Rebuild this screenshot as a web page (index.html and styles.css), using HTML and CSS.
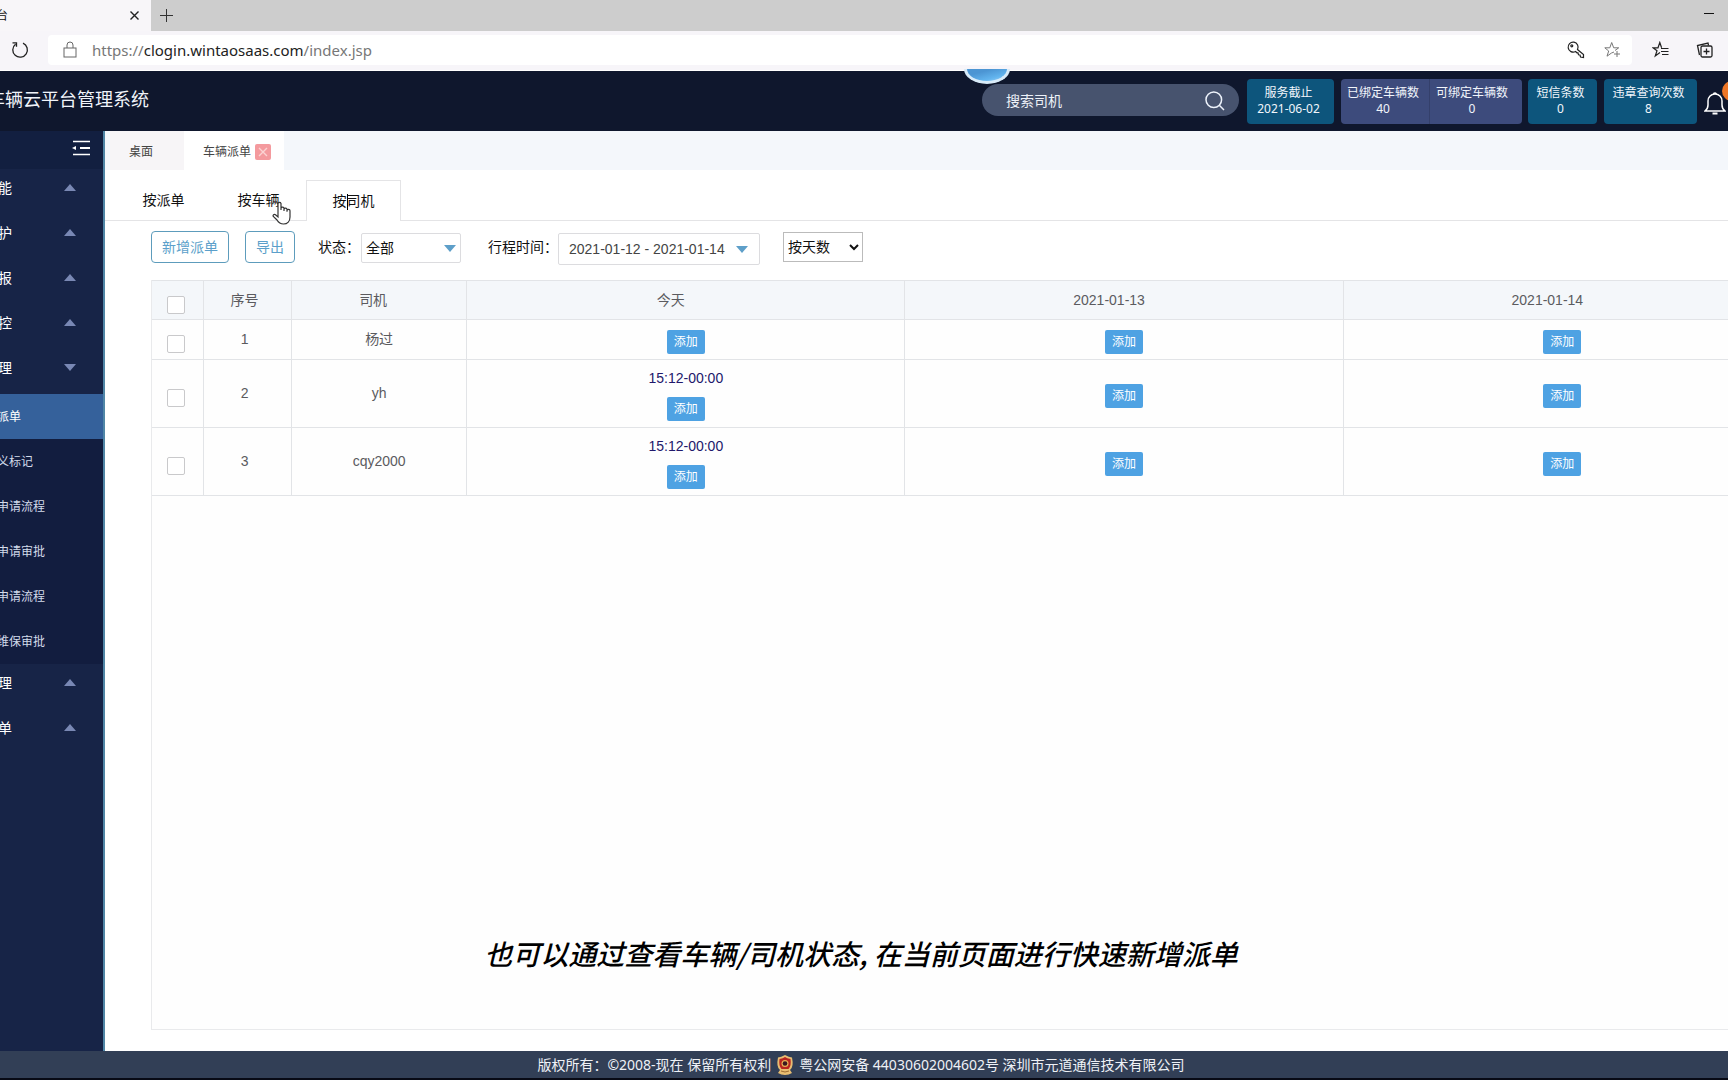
FILE: index.html
```html
<!DOCTYPE html>
<html lang="zh-CN">
<head>
<meta charset="utf-8">
<title>车辆云平台管理系统</title>
<link rel="stylesheet" href="styles.css">
</head>
<body>
<div class="tabstrip">
  <div class="browser-tab"><span class="browser-tab-title">台</span>
    <button class="icon-btn" aria-label="关闭标签页"><svg width="9" height="9" viewBox="0 0 9 9"><path d="M.5 .5l8 8M8.500 .5l-8 8" stroke="#222" stroke-width="1.400"/></svg></button>
  </div>
  <button class="icon-btn new-tab" aria-label="新建标签页"><svg width="13" height="13" viewBox="0 0 13 13"><path d="M6.500 0v13M0 6.500h13" stroke="#333"/></svg></button>
  <button class="icon-btn minimize" aria-label="最小化"><svg width="10" height="5" viewBox="0 0 10 5"><path d="M0 .5h10" stroke="#111"/></svg></button>
</div>
<div class="toolbar">
  <button class="icon-btn reload" aria-label="刷新"><svg width="18" height="18" viewBox="0 0 18 18" fill="none" stroke="#222" stroke-width="1.300"><path d="M12 2.200A7.300 7.300 0 1 1 4.500 3.200M1.500 1.800h4v4"/></svg></button>
  <div class="address">
    <svg width="14" height="18" viewBox="0 0 14 18" fill="none" stroke="#666"><rect x="1" y="7" width="12" height="9"/><path d="M4 7V4a3 3 0 0 1 6 0v3"/></svg>
    <span class="url">https://<b>clogin.wintaosaas.com</b>/index.jsp</span>
    <svg width="18" height="18" viewBox="0 0 18 18" fill="none" stroke="#222" stroke-width="1.200"><path d="M10.500 8.500a5 5 0 1 0-2 2l1.500 1.300 1 0 .5 2 1.500.2.500 2 3 .5V13.500z"/><circle cx="4.800" cy="4.800" r="1"/></svg>
    <svg width="18" height="18" viewBox="0 0 18 18" fill="none" stroke="#777"><path d="M10 11l-2.500 1-4.500 3.200L4.700 10 .8 6.800h5L7.700 1.500l2 5.300h5L11 9.500M13 10v6M10 13h6"/></svg>
  </div>
  <div class="toolbar-actions">
    <svg width="18" height="18" viewBox="0 0 18 18" fill="none" stroke="#222" stroke-width="1.200"><path d="M8 11.500l-4.700 3.500L5 9.800 1 6.800h5l1.800-5.300 1.800 5.300M9 7.500h7.500M9 10.500h7.500M10 13.500h6.500"/></svg>
    <svg width="18" height="18" viewBox="0 0 18 18" fill="none" stroke="#222" stroke-width="1.300"><rect x="5" y="5" width="11" height="11" rx="1.500"/><path d="M10.500 7.500v6M7.500 10.500h6M3.500 14L1.500 4.500 12 2l.5 2.500"/></svg>
  </div>
</div>

<header class="header">
  <h1 class="title">车辆云平台管理系统</h1>
  <div class="droplet"></div>
  <div class="search">
    <input class="search-input" type="text" placeholder="搜索司机" aria-label="搜索司机">
    <svg width="20" height="20" viewBox="0 0 20 20" fill="none" stroke="#eef3fb" stroke-width="1.500"><circle cx="8.800" cy="8.800" r="7.800"/><path d="M14.300 14.300L19 19"/></svg>
  </div>
  <div class="stat stat-date"><span>服务截止</span><span>2021-06-02</span></div>
  <div class="stat-pair">
    <div class="stat-half"><span>已绑定车辆数</span><span>40</span></div>
    <div class="stat-half"><span>可绑定车辆数</span><span>0</span></div>
  </div>
  <div class="stat stat-sms"><span>短信条数</span><span>0</span></div>
  <div class="stat stat-query"><span>违章查询次数</span><span>8</span></div>
  <button class="bell" aria-label="通知"><svg width="22" height="24" viewBox="0 0 22 24" fill="none" stroke="#fff" stroke-width="1.500"><path d="M1 20c2-1.500 3-3 3-6V10a7 7 0 0 1 14 0v4c0 3 1 4.500 3 6zM9.500 3.500a1.500 1.500 0 0 1 3 0"/><path d="M8.500 22.500h5" stroke-width="2"/></svg><span class="bell-dot"></span></button>
</header>

<div class="layout">
  <nav class="sidebar">
    <div class="collapse"><button class="icon-btn" aria-label="收起菜单"><svg width="18" height="16" viewBox="0 0 18 16"><path d="M1 1.500h17M1 14.500h17" stroke="#fff" stroke-width="1.400"/><path d="M8 8h10" stroke="#fff" stroke-width="2"/><path d="M0 8l4-2v4z" fill="#fff"/></svg></button></div>
    <a class="group" href="#"><span>能</span><i class="up"></i></a>
    <a class="group" href="#"><span>护</span><i class="up"></i></a>
    <a class="group" href="#"><span>报</span><i class="up"></i></a>
    <a class="group" href="#"><span>控</span><i class="up"></i></a>
    <a class="group" href="#"><span>理</span><i class="down"></i></a>
    <div class="submenu">
      <a class="item current" href="#">派单</a>
      <a class="item" href="#">义标记</a>
      <a class="item" href="#">申请流程</a>
      <a class="item" href="#">申请审批</a>
      <a class="item" href="#">申请流程</a>
      <a class="item" href="#">维保审批</a>
    </div>
    <a class="group" href="#"><span>理</span><i class="up"></i></a>
    <a class="group" href="#"><span>单</span><i class="up"></i></a>
  </nav>

  <main class="main">
    <div class="page-tabs">
      <a class="page-tab" href="#">桌面</a>
      <div class="page-tab open"><a href="#">车辆派单</a><button class="tab-close" aria-label="关闭车辆派单"><svg width="10" height="10" viewBox="0 0 10 10"><path d="M1 1l8 8M9 1L1 9" stroke="#fbd3d3" stroke-width="1.400"/></svg></button></div>
    </div>
    <div class="view-tabs">
      <button class="view-tab">按派单</button>
      <button class="view-tab">按车辆<svg class="pointer" width="20" height="25" viewBox="0 0 20 25"><path d="M6 14V3.500a1.600 1.600 0 0 1 3 0V10l0-1.500a1.500 1.500 0 0 1 3 .3V11l0-1.500a1.500 1.500 0 0 1 3 .3v2l0-1a1.400 1.400 0 0 1 3 .2V17c0 4-2.500 7-6.500 7-3.500 0-5-1.500-6.500-4L1.300 16.500c-.8-1.500.8-2.700 2.200-1.800L6 17z" fill="#fff" stroke="#333" stroke-width="1.200"/></svg></button>
      <button class="view-tab chosen">按<span class="caret"></span>司机</button>
    </div>
    <div class="filters">
      <button class="outline">新增派单</button>
      <button class="outline">导出</button>
      <label class="state-label" for="state">状态：</label>
      <span class="field state-field"><select id="state"><option>全部</option></select></span>
      <label class="range-label" for="range">行程时间：</label>
      <span class="field range-field"><input id="range" type="text" value="2021-01-12 - 2021-01-14" readonly></span>
      <select class="unit" aria-label="统计方式"><option>按天数</option></select>
    </div>
    <div class="grid">
      <table>
        <colgroup><col class="c-check"><col class="c-no"><col class="c-driver"><col class="c-day"><col class="c-day"><col class="c-day"></colgroup>
        <thead><tr><th><input type="checkbox" aria-label="全选"></th><th class="no">序号</th><th class="driver-head">司机</th><th class="day-head">今天</th><th class="day-head">2021-01-13</th><th class="day-head">2021-01-14</th></tr></thead>
        <tbody>
          <tr><td><input type="checkbox" aria-label="选择 1"></td><td class="no">1</td><td>杨过</td><td><button class="add">添加</button></td><td><button class="add">添加</button></td><td><button class="add">添加</button></td></tr>
          <tr class="tall"><td><input type="checkbox" aria-label="选择 2"></td><td class="no">2</td><td>yh</td><td><a class="trip" href="#">15:12-00:00</a><button class="add">添加</button></td><td><button class="add">添加</button></td><td><button class="add">添加</button></td></tr>
          <tr class="tall"><td><input type="checkbox" aria-label="选择 3"></td><td class="no">3</td><td>cqy2000</td><td><a class="trip" href="#">15:12-00:00</a><button class="add">添加</button></td><td><button class="add">添加</button></td><td><button class="add">添加</button></td></tr>
        </tbody>
      </table>
    </div>
  </main>
</div>

<footer class="footer">
  <span>版权所有：©2008-现在 保留所有权利</span>
  <svg width="20" height="20" viewBox="0 0 20 20"><path d="M3 2.500Q6 2 10 0q4 2 7 2.500Q19 12 15 15l2 3q-3 2-7 2t-7-2l2-3Q1 12 3 2.500z" fill="#e8bd72"/><path d="M4.500 4Q8 3.500 10 2q2 1.500 5.500 2 1 7-2 10h-7Q3.500 11 4.500 4z" fill="#b92520"/><circle cx="10" cy="8.500" r="3.500" fill="#e8ad55"/><circle cx="10" cy="8.500" r="2.300" fill="#3a1820"/><path d="M6 16q4 2 8 0" stroke="#9c6a30" fill="none"/></svg>
  <span>粤公网安备 44030602004602号 深圳市元道通信技术有限公司</span>
</footer>
<p class="caption">也可以通过查看车辆/司机状态, 在当前页面进行快速新增派单</p>
</body>
</html>
```
FILE: styles.css
```css
* { box-sizing: border-box; }
body {
  margin: 0;
  min-height: 100vh;
  display: flex;
  flex-direction: column;
  position: relative;
  overflow: hidden;
  background: #fff;
  color: #111;
  font: 14px/20px "Liberation Sans", "Noto Sans CJK SC", sans-serif;
}
a { color: inherit; text-decoration: none; }
button, input, select { font: inherit; color: inherit; }
svg { display: block; flex: none; }
.icon-btn { border: 0; padding: 0; background: none; }

.tabstrip { display: flex; align-items: center; height: 31px; background: #cdcdcd; padding-right: 14px; }
.browser-tab {
  display: flex; align-items: center; justify-content: space-between;
  width: 151px; height: 31px; padding-right: 12px;
  background: #f8f6f9;
}
.browser-tab-title { font-size: 12px; margin-left: -4px; }
.new-tab { margin-left: 9px; }
.minimize { margin-left: auto; }

.toolbar { display: flex; align-items: center; height: 40px; padding-bottom: 1px; background: #f7f5f9; border-bottom: 1px solid #fff; }
.reload { margin: 0 19px 0 11px; }
.address {
  flex: 1; display: flex; align-items: center; gap: 19px;
  height: 30px; padding: 0 10px 0 15px;
  background: #fff; border-radius: 4px;
}
.url { flex: 1; margin-left: -4px; font: 15px/20px "Noto Sans", sans-serif; color: #777; }
.url b { font-weight: 400; color: #222; }
.toolbar-actions { display: flex; gap: 26px; padding: 0 14px 0 20px; }

.header { position: relative; display: flex; align-items: center; height: 60px; background: #0f172d; }
.title { margin: 0 auto 2px -13px; font-size: 18px; line-height: 24px; font-weight: 400; color: #f1f4fa; }
.search {
  display: flex; align-items: center; justify-content: space-between;
  width: 257px; height: 32px; margin: 0 8px 2px 0; padding: 2px 14px 0 24px;
  border-radius: 16px; background: #47536e;
}
.search-input { width: 160px; border: 0; padding: 0; background: none; outline: 0; }
.search-input::placeholder { color: #eef2f8; opacity: 1; }
.droplet {
  position: absolute; right: 718px; top: -2px; width: 46px; height: 15px;
  border: 3px solid #d8ebf9; border-top: 0; border-radius: 4px 4px 23px 23px / 0 0 15px 15px;
  background: linear-gradient(165deg, #4c95d3 0 30%, #62b4ee 70%, #a6d4f4);
}
.stat, .stat-half {
  display: flex; flex-direction: column; align-items: center; justify-content: center;
  padding-right: 4px;
  font: 12px/16px "Noto Sans", "Noto Sans CJK SC", sans-serif; color: #f1f5fb;
}
.stat { height: 45px; border-radius: 4px; background: #0d557c; margin-right: 7px; }
.stat-date { width: 87px; }
.stat-sms { width: 69px; }
.stat-query { width: 93px; }
.stat-pair { display: flex; width: 181px; height: 45px; margin-right: 6px; border-radius: 4px; background: #3d4b7c; }
.stat-half { flex: 1; }
.stat-half + .stat-half { border-left: 1px solid #34406b; padding-right: 8px; }
.bell { position: relative; width: 24px; margin-top: 4px; padding: 0; border: 0; background: none; }
.bell-dot { position: absolute; right: -14px; top: -10px; width: 20px; height: 20px; border-radius: 50%; background: #ee7626; }

.layout { flex: 1; display: flex; }
.sidebar { width: 105px; flex: none; background: #172447; border-right: 2px solid #5086a6; color: #fff; overflow: hidden; }
.collapse { display: flex; align-items: center; justify-content: flex-end; height: 38px; padding: 0 13px 4px 0; background: #121f40; }
.group { display: flex; align-items: center; justify-content: space-between; height: 45px; padding: 0 27px 8px 0; }
.group span { margin-left: -2px; }
.up, .down { border: 6px solid transparent; border-top-width: 0; border-bottom: 7px solid #7988b4; }
.down { border-top: 7px solid #7988b4; border-bottom-width: 0; }
.submenu { background: #121d3f; }
.item { display: flex; align-items: center; height: 45px; font-size: 12px; color: #d3dbea; }
.item { text-indent: -3px; }
.item.current { background: #35619b; color: #fff; }

.main { flex: 1; min-width: 0; display: flex; flex-direction: column; }
.page-tabs { display: flex; height: 39px; padding-left: 5px; background: #f4f7fb; font-size: 12px; color: #444; }
.page-tab { display: flex; align-items: center; padding: 2px 31px 0 19px; background: #f7f5f7; }
.page-tab.open { gap: 4px; padding: 2px 13px 0 19px; background: #fff; }
.tab-close { display: flex; align-items: center; justify-content: center; width: 16px; height: 16px; padding: 0; border: 0; border-radius: 2px; background: #f49a9e; }
.view-tabs { display: flex; align-items: flex-end; height: 51px; padding-left: 11px; border-bottom: 1px solid #e4e4e6; }
.view-tab { position: relative; width: 95px; height: 40px; padding: 0; border: 0; background: none; }
.view-tab.chosen { border: 1px solid #e4e4e6; border-bottom: 0; background: #fff; height: 41px; margin-bottom: -1px; }
.caret { display: inline-block; width: 1px; height: 16px; margin-right: -1px; background: #000; vertical-align: middle; }
.pointer { position: absolute; left: 61px; top: 20px; }

.filters { display: flex; align-items: center; height: 59px; padding: 0 0 6px 46px; }
.outline { height: 32px; margin: 0 16px 2px 0; padding: 0 10px; border: 1px solid #5d9cbc; border-radius: 4px; background: #fff; color: #5b9fca; }
.filters label { flex: none; margin-bottom: 2px; white-space: nowrap; }
.filters .state-label { width: 43px; margin-left: 7px; }
.filters .range-label { width: 70px; margin-left: 27px; }
.field { position: relative; }
.field::after {
  content: ""; position: absolute; right: 5px; top: 12px; pointer-events: none;
  border: 6px solid transparent; border-top: 7px solid #5e9fc9; border-bottom: 0;
}
.field select, .field input { display: block; height: 30px; border: 1px solid #dcdcdf; border-radius: 2px; background: #fff; outline: 0; appearance: none; }
.field select { width: 100px; padding: 0 4px; }
.field input { width: 202px; height: 32px; padding: 0 10px; color: #444; }
.range-field { margin-top: 2px; }
.range-field::after { right: 12px; top: 13px; }
.unit { width: 80px; height: 30px; margin: 0 0 2px 23px; border: 1px solid #bbb; background: #fff; color: #111; }

.grid { flex: 1; margin: 0 0 21px 46px; border: 1px solid #e9eaec; border-right: 0; border-top: 0; background: #fefefe; overflow: hidden; }
table { width: 1630px; table-layout: fixed; border-collapse: separate; border-spacing: 0; color: #5b5b5f; }
.c-check { width: 52px; }
.c-no { width: 88px; }
.c-driver { width: 175px; }
.c-day { width: 438px; }
th, td { height: 40px; padding: 0 0 2px; border: 0 solid #e2e4e7; border-width: 0 1px 1px 0; text-align: center; font-weight: 400; vertical-align: middle; }
th { padding-bottom: 0; background: #f4f7fa; border-top-width: 1px; }
.tall td { height: 68px; }
.no { padding-right: 6px; }
.driver-head { padding-right: 12px; }
.day-head { padding-right: 30px; }
input[type="checkbox"] { appearance: none; display: block; width: 18px; height: 18px; margin: 9px auto 0 15px; border: 1px solid #c9c9cb; border-radius: 2px; background: #fff; }
td input[type="checkbox"] { margin-top: 11px; }
.add { display: block; width: 38px; height: 24px; margin: 6px auto 0; padding: 0; border: 0; border-radius: 2px; background: #4ea2e3; color: #fff; font-size: 12px; line-height: 24px; }
.trip { display: block; margin-top: 4px; color: #22186b; }
.trip + .add { margin-top: 9px; }

.footer {
  display: flex; align-items: center; justify-content: center; gap: 4px;
  height: 29px; padding-right: 6px;
  background: #323f56; border-bottom: 2px solid #080a15; color: #eef1f6;
  font-family: "Noto Sans", "Noto Sans CJK SC", sans-serif;
}
.caption {
  position: absolute; left: 0; right: 0; bottom: 107px; margin: 0; padding-right: 6px;
  text-align: center; font: italic 500 28px/40px "Noto Sans CJK SC", sans-serif; color: #000;
  pointer-events: none;
}
```
